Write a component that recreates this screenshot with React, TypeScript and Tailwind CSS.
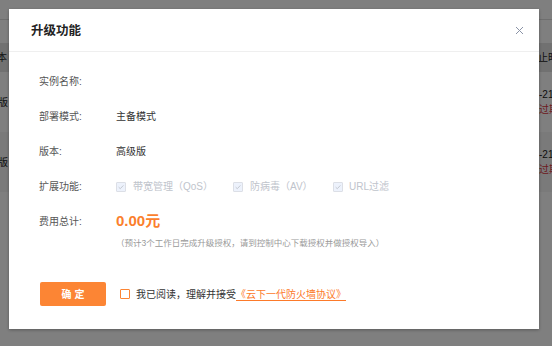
const font = 'font-["Liberation_Sans","Noto_Sans_CJK_SC",sans-serif]';

function Check({ disabled }: { disabled?: boolean }) {
  return (
    <span className="flex h-[10px] w-[10px] items-center justify-center rounded-[1px] border border-[#dcdfe6] bg-[#edf2fc]">
      {disabled && (
        <svg width="8" height="8" viewBox="0 0 8 8">
          <path d="M1.6 4.1 3.3 5.7 6.4 2.4" fill="none" stroke="#c0c4cc" strokeWidth="0.9" />
        </svg>
      )}
    </span>
  );
}

function Row({ label, children }: { label: string; children?: React.ReactNode }) {
  return (
    <div className="flex h-[35px] items-center">
      <div className="w-[77px] shrink-0 text-[10px] text-[#555]">{label}</div>
      <div className="flex items-center text-[10px] text-[#333]">{children}</div>
    </div>
  );
}

export default function App() {
  return (
    <div className={`relative h-[346px] w-[552px] overflow-hidden bg-white ${font}`}>
      {/* page behind the dialog */}
      <div className="flex flex-col text-[10px] text-[#222]">
        <div className="h-[20px] border-b border-[#ddd]" />
        <div className="h-[23px]" />
        <div className="flex h-[29px] items-center justify-between bg-[#e2e2e2]">
          <span className="-ml-[3px]">本</span>
          <span className="w-[14px] whitespace-nowrap">止时间</span>
        </div>
        <div className="flex h-[60px] items-center justify-between">
          <span className="-ml-[2px]">版</span>
          <div className="w-[13px] whitespace-nowrap leading-[15px]">
            <div>-21 10</div>
            <div className="text-[#d9363e]">过期</div>
          </div>
        </div>
        <div className="flex h-[60px] items-center justify-between bg-[#f5f5f5]">
          <span className="-ml-[2px]">版</span>
          <div className="w-[13px] whitespace-nowrap leading-[15px]">
            <div>-21 10</div>
            <div className="text-[#d9363e]">过期</div>
          </div>
        </div>
      </div>

      {/* overlay + dialog */}
      <div className="absolute inset-0 bg-black/50 pl-[9px] pt-[9px]">
        <div className="flex h-[320px] w-[530px] flex-col bg-white shadow-[0_1px_3px_rgba(0,0,0,0.3)]">
          <div className="flex h-[43px] items-center justify-between border-b border-[#efefef] pl-[22px] pr-[15px] pt-[3px]">
            <span className="text-[12.5px] font-bold text-[#222]">升级功能</span>
            <svg width="9" height="9" viewBox="0 0 9 9" className="mb-[2px]">
              <path d="M1 1 8 8M8 1 1 8" stroke="#8a93a6" strokeWidth="1" />
            </svg>
          </div>

          <div className="flex flex-col pl-[30px] pt-[12px]">
            <Row label="实例名称:" />
            <Row label="部署模式:">主备模式</Row>
            <Row label="版本:">高级版</Row>
            <Row label="扩展功能:">
              <div className="flex items-center text-[#c0c4cc]">
                <div className="flex w-[117px] items-center gap-[7px]">
                  <Check disabled />
                  <span>带宽管理（QoS）</span>
                </div>
                <div className="flex w-[100px] items-center gap-[7px]">
                  <Check disabled />
                  <span>防病毒（AV）</span>
                </div>
                <div className="flex items-center gap-[6px]">
                  <Check disabled />
                  <span>URL过滤</span>
                </div>
              </div>
            </Row>
            <Row label="费用总计:">
              <span className="text-[15px] font-bold text-[#fb7f2d]">0.00元</span>
            </Row>
            <div className="-mt-[1px] pl-[77px] text-[8.5px] leading-[10px] text-[#999]">
              （预计3个工作日完成升级授权，请到控制中心下载授权并做授权导入）
            </div>
          </div>

          <div className="mt-[34px] flex items-center pl-[31px]">
            <button className="flex h-[24px] w-[66px] items-center justify-center rounded-[2px] bg-[#fc8534] text-[10px] font-bold text-white">
              确 定
            </button>
            <div className="ml-[14px] flex items-center gap-[6px] text-[10px] text-[#333]">
              <span className="h-[10px] w-[10px] rounded-[1px] border border-[#fc8534] bg-white" />
              <span>
                我已阅读，理解并接受
                <span className="text-[#fc7a2a] underline underline-offset-2">《云下一代防火墙协议》</span>
              </span>
            </div>
          </div>
        </div>
      </div>
    </div>
  );
}
